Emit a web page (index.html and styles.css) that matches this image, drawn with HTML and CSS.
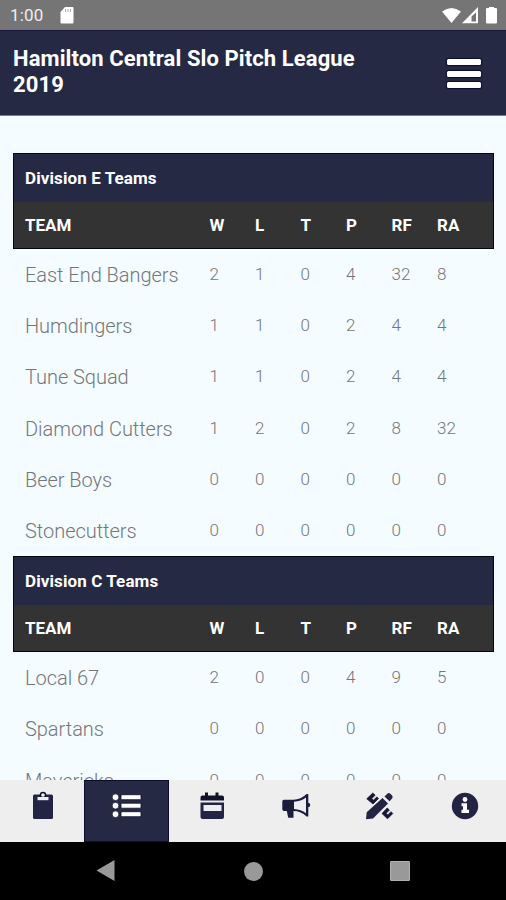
FILE: index.html
```html
<!DOCTYPE html>
<html lang="en">
<head>
  <meta charset="UTF-8">
  <meta name="viewport" content="width=device-width, initial-scale=1.0">
  <title>Hamilton Central Slo Pitch League 2019</title>
  <link rel="stylesheet" href="styles.css">
</head>
<body>

  <!-- Status bar -->
  <div class="status">
    <span class="clock">1:00</span>
    <svg class="sd" width="14" height="17" viewBox="0 0 14 17"><path fill="#fff" d="M5 0h7.500q1 0 1 1v14.500q0 1-1 1H1.500q-1 0-1-1V5z"/><path stroke="#aaa" d="M5.500 2v3M8 2v3M10.500 2v3"/></svg>
    <svg class="signals" width="56" height="18" viewBox="0 0 56 18">
      <path fill="#fff" d="M0 4.500Q9.500-2.500 19 4.500L9.500 16z"/>
      <path fill="#fff" fill-rule="evenodd" d="M20 16.300 36 0v16.300zM29.500 9.500v5h4.500V5.500z"/>
      <path fill="#fff" d="M47 1V0h5v1h2q1 0 1 1v13.500q0 1-1 1h-9q-1 0-1-1V2q0-1 1-1z"/>
    </svg>
  </div>

  <header class="header">
    <h1>Hamilton Central Slo Pitch League 2019</h1>
    <div class="menu"><i></i><i></i><i></i></div>
  </header>

  <!-- Standings -->
  <main class="content">
    <section class="division">
      <div class="division-head">
        <h2>Division E Teams</h2>
        <div class="row labels"><span>TEAM</span><span>W</span><span>L</span><span>T</span><span>P</span><span>RF</span><span>RA</span></div>
      </div>
      <div class="row"><span class="team">East End Bangers</span><span>2</span><span>1</span><span>0</span><span>4</span><span>32</span><span>8</span></div>
      <div class="row"><span class="team">Humdingers</span><span>1</span><span>1</span><span>0</span><span>2</span><span>4</span><span>4</span></div>
      <div class="row"><span class="team">Tune Squad</span><span>1</span><span>1</span><span>0</span><span>2</span><span>4</span><span>4</span></div>
      <div class="row"><span class="team">Diamond Cutters</span><span>1</span><span>2</span><span>0</span><span>2</span><span>8</span><span>32</span></div>
      <div class="row"><span class="team">Beer Boys</span><span>0</span><span>0</span><span>0</span><span>0</span><span>0</span><span>0</span></div>
      <div class="row"><span class="team">Stonecutters</span><span>0</span><span>0</span><span>0</span><span>0</span><span>0</span><span>0</span></div>
    </section>
    <section class="division">
      <div class="division-head">
        <h2>Division C Teams</h2>
        <div class="row labels"><span>TEAM</span><span>W</span><span>L</span><span>T</span><span>P</span><span>RF</span><span>RA</span></div>
      </div>
      <div class="row"><span class="team">Local 67</span><span>2</span><span>0</span><span>0</span><span>4</span><span>9</span><span>5</span></div>
      <div class="row"><span class="team">Spartans</span><span>0</span><span>0</span><span>0</span><span>0</span><span>0</span><span>0</span></div>
      <div class="row"><span class="team">Mavericks</span><span>0</span><span>0</span><span>0</span><span>0</span><span>0</span><span>0</span></div>
    </section>
  </main>

  <!-- Tabs -->
  <nav class="tabs">
    <div class="tab">
      <svg width="32" height="32" viewBox="0 0 32 32">
        <rect x="6" y="4.500" width="20" height="24.500" rx="1.500" fill="#232344"/>
        <circle cx="16" cy="5" r="2.600" fill="#eee" stroke="#111128" stroke-width="1.500"/>
        <path fill="#eee" d="M10.500 7h11v3.200h-11z"/>
      </svg>
    </div>
    <div class="tab active">
      <svg width="32" height="32" viewBox="0 0 32 32">
        <g fill="#fff" stroke="#0c0c2c" stroke-width=".8">
          <circle cx="4.500" cy="7.200" r="3.400"/><circle cx="4.500" cy="15.700" r="3.400"/><circle cx="4.500" cy="24.200" r="3.400"/>
          <rect x="10" y="4.700" width="20" height="5" rx="1"/><rect x="10" y="13.200" width="20" height="5" rx="1"/><rect x="10" y="21.700" width="20" height="5" rx="1"/>
        </g>
      </svg>
    </div>
    <div class="tab">
      <svg width="32" height="32" viewBox="0 0 32 32">
        <path fill="#111128" d="M9 2.500h3v3h7.500v-3h3v3H26q2 0 2 2V10.500H4.500v-3q0-2 2-2H9z"/>
        <path fill="#232344" fill-rule="evenodd" d="M4.500 12.500H28v14.500q0 2-2 2H6.500q-2 0-2-2zM7.500 15v6h18v-6z"/>
      </svg>
    </div>
    <div class="tab">
      <svg width="32" height="32" viewBox="0 0 32 32">
        <path fill="#1c1c3c" fill-rule="evenodd" d="M4 9.800h9.500Q21 9.500 26.500 4h1.800v8.800q2 .5 2 2.200t-2 2.200v9.300h-1.800Q21 21 13.500 21v6.700H8.200L6.800 21H4q-1.700 0-1.700-1.700v-7.800q0-1.700 1.700-1.700zM14 11.700v7.200q7 .3 12 4.300V7.500q-5 4-12 4.200z"/>
      </svg>
    </div>
    <div class="tab">
      <svg width="32" height="32" viewBox="0 0 32 32">
        <path fill="#232344" d="M18.500 8l5.500 5.500L9 28.500l-7 .7.700-7zM20.500 6.500l2.800-2.800q1.500-1.200 3 0l1.800 1.800q1.200 1.500 0 3l-2.600 2.800z"/>
        <path fill="#171733" stroke="#171733" stroke-width=".8" stroke-linejoin="round" d="M2.800 8.800 8.800 3l2.300 2.200-3.300 3.300 1.700 1.700 3.300-3.300 1.700 1.600L9 14zM23.200 18 18 23.500l5.500 5.300 5.300-5.300-1.800-1.800-3.200 3.200-1.600-1.600 3.200-3.200z"/>
      </svg>
    </div>
    <div class="tab">
      <svg width="32" height="32" viewBox="0 0 32 32">
        <circle cx="16" cy="16" r="13.200" fill="#232344"/>
        <circle cx="16" cy="9.500" r="2.400" fill="#fff"/>
        <path fill="#fff" d="M12.500 13.300H18v6.400h2V23h-7.500v-3.300H14v-3.400h-1.500z"/>
      </svg>
    </div>
  </nav>

  <!-- System navigation -->
  <div class="system-nav">
    <svg width="20" height="22" viewBox="0 0 20 22"><path fill="#999" d="M18.500 0v21L.5 10.500z"/></svg>
    <span class="home"></span>
    <span class="recent"></span>
  </div>

</body>
</html>
```
FILE: styles.css
```css
* {
  box-sizing: border-box;
}

body {
  margin: 0;
  height: 900px;
  display: flex;
  flex-direction: column;
  overflow: hidden;
  font-family: Roboto, sans-serif;
  background: #f5fcff;
}

/* Status bar */
.status {
  flex: none;
  height: 30px;
  padding: 0 8px 0 10px;
  display: flex;
  align-items: center;
  background: #757575;
  color: #eee;
}

.clock {
  width: 50px;
  font-size: 17px;
  line-height: 32px;
  letter-spacing: 0.2px;
}

.signals {
  margin-left: auto;
  margin-top: 1px;
}

/* Header */
.header {
  flex: none;
  height: 86px;
  padding: 15px 25px 0 13px;
  display: flex;
  justify-content: space-between;
  background: #262944;
  border-top: 1px solid #17173d;
  border-bottom: 1px solid #777b8c;
}

.header h1 {
  margin: 0;
  width: 360px;
  color: #fff;
  font-size: 22px;
  line-height: 26px;
  font-weight: 700;
  letter-spacing: 0.1px;
}

.menu {
  width: 34px;
  padding-top: 13px;
  display: flex;
  flex-direction: column;
  gap: 5.500px;
}

.menu i {
  height: 6px;
  border-radius: 1.500px;
  background: #fff;
  box-shadow: 0 0 1px 1px #0d0d30;
}

/* Standings */
.content {
  flex: 1;
  min-height: 0;
  padding: 37px 12px 0 13px;
  overflow: hidden;
}

.division-head {
  height: 95.700px;
  background: #333;
  border: 1px solid #050510;
  color: #fff;
}

.division h2 {
  margin: 0;
  height: 48px;
  padding-left: 11px;
  background: #262944;
  font-size: 17px;
  line-height: 48px;
  letter-spacing: 0.1px;
}

.row {
  height: 51.300px;
  padding-left: 12px;
  display: grid;
  grid-template-columns: 184.500px repeat(6, 45.500px);
  color: #73777a;
  font-size: 17px;
  font-weight: 300;
  line-height: 50.500px;
}

.row .team {
  font-size: 20px;
  line-height: 53.500px;
  letter-spacing: -0.04px;
}

.row.labels {
  height: 45px;
  padding-left: 11px;
  color: #fff;
  font-weight: 700;
  line-height: 47px;
}

/* Tabs */
.tabs {
  flex: none;
  height: 62px;
  display: grid;
  grid-template-columns: repeat(6, 1fr);
  background: #eee;
}

.tab {
  padding: 10px 0 0 2px;
  display: flex;
  justify-content: center;
}

.tab.active {
  background: #262944;
  border: 1px solid #0c0c2c;
  padding-top: 9px;
}

/* System navigation */
.system-nav {
  flex: none;
  height: 58px;
  padding: 0 96px 0 96px;
  display: flex;
  align-items: center;
  justify-content: space-between;
  background: #000;
}

.home {
  width: 19px;
  height: 19px;
  border-radius: 50%;
  background: #999;
}

.recent {
  width: 20px;
  height: 20px;
  border-radius: 1px;
  background: #999;
  border: 1px solid #b0b0b0;
}
```
